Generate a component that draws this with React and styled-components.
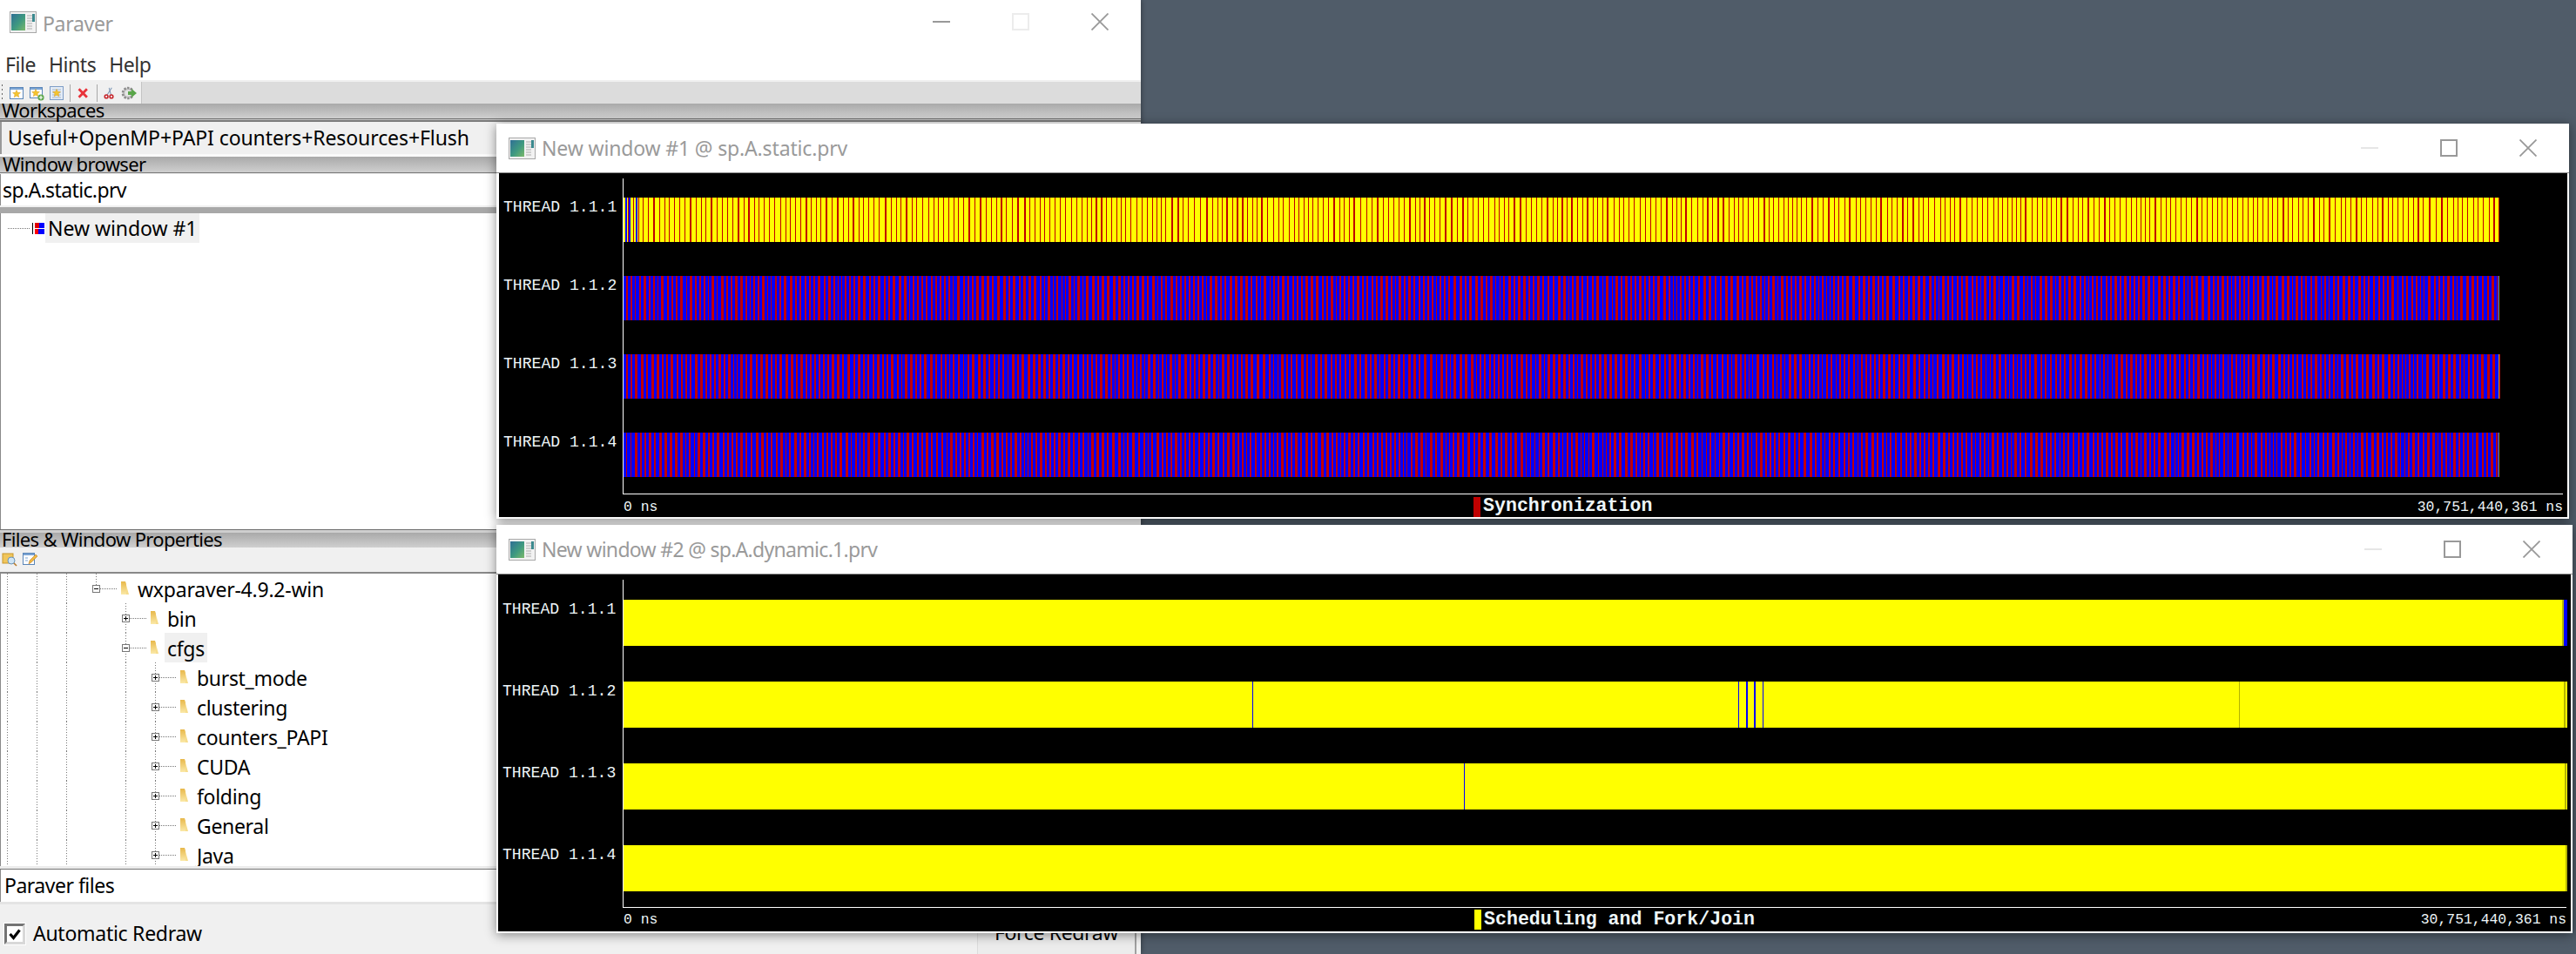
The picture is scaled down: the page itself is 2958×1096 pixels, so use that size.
import React from 'react';
import styled, { createGlobalStyle } from 'styled-components';

const Global = createGlobalStyle`
  html, body { margin: 0; padding: 0; background: #505c69; overflow: hidden; }
  #root { width: 2958px; height: 1096px; }
  * { box-sizing: border-box; }
`;

const UI = `"Noto Sans", "Open Sans", sans-serif`;
const MONO = `"Liberation Mono", monospace`;

const Desktop = styled.div`
  position: relative; width: 2958px; height: 1096px; overflow: hidden;
  background: #505c69; font-family: ${UI}; color: #000;
`;

/* ---------- main window ---------- */
const MainWindow = styled.div`
  position: absolute; left: 0; top: 0; width: 1310px; height: 1096px;
  display: flex; flex-direction: column; background: #f0f0f0;
  box-shadow: 0 0 6px rgba(0,0,0,.45);
`;
const TitleBar = styled.div`
  flex: none; height: ${p => p.$h}px; background: #fff; display: flex; align-items: center;
  padding-left: ${p => p.$pl}px; border-bottom: ${p => p.$line ? '1px solid #8a8a8a' : 'none'};
`;
const TitleText = styled.span`
  margin-left: ${p => p.$gap}px; padding-top: ${p => p.$pt || 0}px; font-size: 23px; letter-spacing: ${p => p.$ls}px; color: #9a9a9a; line-height: 1; white-space: nowrap;
`;
const Controls = styled.div`
  margin-left: auto; display: flex; align-items: center; padding-right: ${p => p.$pr}px; gap: ${p => p.$gap}px;
`;
const MenuBar = styled.div`
  flex: none; height: 42px; background: #fff; display: flex; align-items: center; gap: 15px; padding: 14px 0 8px 6px;
  font-size: 23px; letter-spacing: -.45px; color: #333; line-height: 1;
`;
const ToolStrip = styled.div`
  flex: none; height: 27px; border-top: 2px solid #f0f0f0; background: #dcdcdc; display: flex;
`;
const ToolGroup = styled.div`
  width: 163px; background: #f0f0f0; border-right: 1px solid #c4c4c4; display: flex; align-items: center; padding-left: 2px; position: relative;
`;
const Grip = styled.span`
  width: 2px; height: 20px; margin-right: 7px; background: repeating-linear-gradient(to bottom,#666 0 2px,transparent 2px 5px);
`;
const ToolIcon = styled.svg`
  flex: none; width: ${p => p.$w || 18}px; height: 18px; margin-right: ${p => p.$mr ?? 5}px; display: block;
`;
const ToolSep = styled.span`
  width: 1px; height: 20px; background: #a8a8a8; margin: 0 ${p => p.$m || 8}px 0 ${p => p.$ml || 3}px;
`;
const Caption = styled.div`
  position: relative; z-index: 1; flex: none; height: ${p => p.$h}px; display: flex; align-items: center; padding: 0 0 3px ${p => p.$pl || 2}px;
  background: linear-gradient(to bottom, #a9a9a9, #cfcfcf); font-size: 22px; letter-spacing: -.65px; line-height: 1; white-space: nowrap;
  border-bottom: ${p => p.$bb || 'none'};
`;
const Sash = styled.div`
  position: relative; flex: none; height: ${p => p.$h}px; background: ${p => p.$c};
`;
const ComboBox = styled.div`
  flex: none; height: 37px; background: #f0f0f0; border-left: 2px solid #9a9a9a; display: flex; align-items: center; padding-left: 7px;
  font-size: 23px; letter-spacing: -.09px; white-space: nowrap; line-height: 1;
`;
const Field = styled.div`
  flex: none; height: ${p => p.$h}px; background: #fff; border-left: 1px solid #8a8a8a; display: flex; align-items: center; padding-left: ${p => p.$pl}px;
  font-size: 23px; letter-spacing: ${p => p.$ls}px; line-height: 1;
`;
const TreePane = styled.div`
  flex: 0 0 ${p => p.$fixed}px; margin-bottom: ${p => p.$mb || 0}px; background: #fff; overflow: hidden; border-left: 1px solid #8a8a8a; display: flex; flex-direction: column;
`;
const TreeRow = styled.div`
  flex: none; height: 34px; display: flex; align-items: stretch; margin-left: -1px;
`;
const Guide = styled.span`
  flex: none; width: 34px;
  ${p => p.$on && `background: repeating-linear-gradient(to bottom,#777 0 1px,transparent 1px 3px) 8px 0 / 1px 100% no-repeat;`}
`;
const Expander = styled.span`
  flex: none; width: 34px; position: relative;
  background:
    repeating-linear-gradient(to right,#777 0 1px,transparent 1px 2px) 13px 17px / 20px 1px no-repeat,
    repeating-linear-gradient(to bottom,#777 0 1px,transparent 1px 3px) 8px 0 / 1px ${p => p.$top ? '14px' : '100%'} no-repeat;
`;
const ExpBox = styled.span`
  position: absolute; left: 4px; top: 13px; width: 9px; height: 9px; background: #fff; border: 1px solid #777;
  &::before { content: ''; position: absolute; left: 1px; right: 1px; top: 3px; height: 1px; background: #000; }
  ${p => p.$plus && `&::after { content: ''; position: absolute; top: 1px; bottom: 1px; left: 3px; width: 1px; background: #000; }`}
`;
const FolderIcon = styled.svg`
  flex: none; width: 11px; height: 18px; margin: 8px 9px 0 2px; display: block;
`;
const NodeLabel = styled.span`
  display: flex; align-items: center; padding: ${p => p.$pt ?? 3}px 3px 0; margin-left: -3px; height: 34px; font-size: 23px; letter-spacing: ${p => p.$ls ?? -.32}px; white-space: nowrap; line-height: 1;
  background: ${p => p.$sel ? '#f0f0f0' : 'transparent'};
`;
const Leader = styled.span`
  flex: none; width: 36px; margin-left: 9px; background: repeating-linear-gradient(to right,#777 0 1px,transparent 1px 2px) 0 17px / 25px 1px no-repeat;
`;
const WinNode = styled.svg`
  flex: none; width: 14px; height: 13px; margin: 11px 4px 0 -8px; display: block;
`;
const PanelTools = styled.div`
  flex: none; height: 30px; background: #f0f0f0; border-bottom: 2px solid #888; display: flex; align-items: center; gap: 5px; padding: 0 0 3px 2px;
`;
const BottomBar = styled.div`
  flex: 1; display: flex; align-items: stretch; background: #f0f0f0;
`;
const CheckRow = styled.label`
  display: flex; align-items: center; gap: 9px; padding: 0 0 0 5px; font-size: 23px; letter-spacing: -.27px; line-height: 1; margin-top: 10px;
`;
const CheckBox = styled.span`
  width: 24px; height: 24px; background: #fff; display: flex; align-items: center; justify-content: center;
  border: 3px solid; border-color: #747474 #d8d8d8 #d8d8d8 #747474; outline: 1px solid #fff;
`;
const CheckMark = styled.svg`
  width: 14px; height: 14px; display: block;
`;
const ForceButton = styled.div`
  margin-left: auto; width: 183px; margin-right: 5px; background: #ececec; border-left: 1px solid #dcdcdc; border-right: 2px solid #a0a0a0;
  display: flex; justify-content: center; align-items: center; font-size: 23px; letter-spacing: -.35px; line-height: 1; padding-top: 8px; white-space: nowrap;
`;

/* ---------- timeline windows ---------- */
const TimelineWindow = styled.div`
  position: absolute; left: 570px; top: ${p => p.$top}px; width: ${p => p.$w}px; height: ${p => p.$h}px;
  display: flex; flex-direction: column; background: #fff; box-shadow: 0 2px 12px rgba(0,0,0,.45);
  z-index: ${p => p.$z};
`;
const Plot = styled.div`
  flex: 1; margin: 0 2px 2px ${p => p.$ml}px; background: #000; color: #eef6f8; font-family: ${MONO}; display: flex; flex-direction: column;
`;
const PlotBody = styled.div`
  flex: none; display: flex; padding-top: 6px;
`;
const LabelColumn = styled.div`
  flex: none; width: ${p => p.$w}px; padding: ${p => p.$pt}px 0 0 5px; display: flex; flex-direction: column; gap: ${p => p.$gap}px;
`;
const ThreadLabel = styled.div`
  height: 22px; font-size: 18.1px; line-height: 22px; white-space: nowrap;
`;
const TraceColumn = styled.div`
  flex: none; width: ${p => p.$w}px; height: ${p => p.$h}px; border-left: 1px solid #fff; border-bottom: 1px solid #fff;
  padding-top: ${p => p.$pt}px; display: flex; flex-direction: column; gap: ${p => p.$gap}px;
`;
const Trace = styled.svg`
  display: block; flex: none; overflow: visible;
`;
const PlotFooter = styled.div`
  flex: 1; display: grid; grid-template-columns: ${p => p.$col}px 1fr auto; align-items: center; padding: ${p => p.$pt || 0}px 5px 0 ${p => p.$pl}px; font-size: 16.4px; white-space: nowrap;
`;
const Legend = styled.div`
  display: flex; align-items: center; gap: 3px; font-size: 21.6px; font-weight: 700; line-height: 1;
`;
const Swatch = styled.span`
  width: 8px; height: 23px; background: ${p => p.$c};
`;

/* ---------- icons ---------- */
const AppIcon = () => (
  <svg width="31" height="25" viewBox="0 0 31 25" style={{ flex: 'none', display: 'block' }}>
    <defs>
      <linearGradient id="appg" x1="0" y1="0" x2="1" y2="1">
        <stop offset="0" stopColor="#2f6f95" /><stop offset=".55" stopColor="#3f9a80" /><stop offset="1" stopColor="#7cb96a" />
      </linearGradient>
    </defs>
    <rect x=".5" y=".5" width="30" height="24" fill="#f2f2f2" stroke="#a8a8a8" />
    <rect x="2" y="3" width="16" height="19" fill="url(#appg)" />
    <path d="M20 5h6M20 8h6M20 11h6M20 14h6M20 17h6M20 20h6" stroke="#c4c4c4" strokeWidth="1.4" />
    <rect x="26" y="3" width="3" height="9" fill="#3c8a8f" />
  </svg>
);
const Glyph = ({ kind, c }) => (
  <svg width="20" height="20" viewBox="0 0 20 20" style={{ display: 'block', flex: 'none' }} shapeRendering={kind === 'square' || kind === 'min' ? 'crispEdges' : 'auto'}>
    {kind === 'min' && <rect x="0" y="9" width="20" height="2" fill={c} />}
    {kind === 'square' && <rect x="1" y="1" width="18" height="18" fill="none" stroke={c} strokeWidth="2" />}
    {kind === 'close' && <path d="M.5.5l19 19M19.5.5l-19 19" stroke={c} strokeWidth="1.8" fill="none" />}
  </svg>
);
const Folder = () => (
  <FolderIcon viewBox="0 0 11 18">
    <defs><linearGradient id="fg" x1="0" y1="0" x2="0" y2="1"><stop offset="0" stopColor="#e8b84a" /><stop offset="1" stopColor="#fbe9a8" /></linearGradient></defs>
    <path d="M1 1l5 0 1 3 0 12-6 0z" fill="url(#fg)" />
    <path d="M7 5l3 11-3 0z" fill="#f6dc8c" />
  </FolderIcon>
);

const Star = ({ x = 9, y = 9, r = 4.6 }) => {
  const pts = [];
  for (let i = 0; i < 10; i++) {
    const a = -Math.PI / 2 + i * Math.PI / 5;
    const q = i % 2 ? r * 0.45 : r;
    pts.push(`${(x + q * Math.cos(a)).toFixed(1)},${(y + q * Math.sin(a)).toFixed(1)}`);
  }
  return <polygon points={pts.join(' ')} fill="#f5c52e" stroke="#d89a1c" strokeWidth=".5" />;
};

/* ---------- traces ---------- */
function rng(seed) {
  let a = seed >>> 0;
  return () => {
    a = (a + 0x6d2b79f5) >>> 0;
    let t = a;
    t = Math.imul(t ^ (t >>> 15), t | 1);
    t ^= t + Math.imul(t ^ (t >>> 7), t | 61);
    return ((t ^ (t >>> 14)) >>> 0) / 4294967296;
  };
}
function stripes(seed, width, height, gapChoices, barChoices) {
  const r = rng(seed);
  let x = 0, d = '';
  while (x < width) {
    x += gapChoices[Math.floor(r() * gapChoices.length)];
    const w = barChoices[Math.floor(r() * barChoices.length)];
    if (x < width) d += `M${x} 0h${w}v${height}h-${w}z`;
    x += w;
  }
  return d;
}
const W1 = 2154, H1 = 51;
const SYNC_Y = stripes(11, W1, H1, [4, 4, 5, 5, 5, 5, 6], [1, 1, 1, 1, 2]);
const SYNC_B = [21, 77, 133].map(s => stripes(s, W1, H1, [3, 3, 3, 4], [2, 2, 2, 3, 3, 1]));

const StripedTrace = ({ base, d, edge, early }) => (
  <Trace width={W1} height={H1} viewBox={`0 0 ${W1} ${H1}`} shapeRendering="crispEdges">
    <rect width={W1} height={H1} fill={base} />
    <path d={d} fill="#c00000" />
    {early && early.map(x => <rect key={x} x={x} width="2" height={H1} fill="#0000ff" />)}
    <rect x={W1 - 1} width="1" height={H1} fill={edge} />
  </Trace>
);
const W2 = 2232, H2 = 53;
const SolidTrace = ({ marks }) => (
  <Trace width={W2} height={H2} viewBox={`0 0 ${W2} ${H2}`} shapeRendering="crispEdges">
    <rect width={W2} height={H2} fill="#ffff00" />
    {marks.map(([x, w, c]) => <rect key={x} x={x} width={w} height={H2} fill={c} />)}
  </Trace>
);

const B = '#0000ff', O = '#b4b400';
const DYN = [
  [[2226, 2, O], [2228, 4, B]],
  [[722, 1, B], [1280, 1, B], [1289, 2, B], [1298, 2, B], [1308, 1, B], [1855, 1, O], [2228, 2, O]],
  [[965, 1, B], [2229, 2, O]],
  [[2230, 2, O]],
];

const Node = ({ guides, kind, sel, ls, children }) => (
  <TreeRow>
    {guides.map((g, i) => <Guide key={i} $on={g} />)}
    <Expander $top={kind === 'top'}>
      <ExpBox $plus={kind === 'plus'} />
    </Expander>
    <Folder />
    <NodeLabel $sel={sel} $ls={ls}>{children}</NodeLabel>
  </TreeRow>
);

const Title = ({ text, ls }) => (
  <TitleBar $h={57} $pl={14} $line>
    <AppIcon />
    <TitleText $gap={7} $ls={ls}>{text}</TitleText>
    <Controls $pr={37} $gap={71}>
      <Glyph kind="min" c="#e6e6e6" />
      <Glyph kind="square" c="#999" />
      <Glyph kind="close" c="#999" />
    </Controls>
  </TitleBar>
);

export default function App() {
  const g3 = [1, 1, 1];
  return (
    <Desktop>
      <Global />
      <MainWindow>
        <TitleBar $h={50} $pl={11}>
          <AppIcon />
          <TitleText $gap={7} $ls={-.3} $pt={5}>Paraver</TitleText>
          <Controls $pr={37} $gap={71}>
            <Glyph kind="min" c="#999" />
            <Glyph kind="square" c="#ececec" />
            <Glyph kind="close" c="#999" />
          </Controls>
        </TitleBar>
        <MenuBar><span>File</span><span>Hints</span><span>Help</span></MenuBar>
        <ToolStrip>
          <ToolGroup>
            <Grip />
            <ToolIcon viewBox="0 0 18 18"><rect x="1.5" y="2.5" width="15" height="13" fill="#fff" stroke="#5b86b8" /><rect x="2" y="3" width="14" height="2" fill="#7aa4d4" /><Star y={10} /></ToolIcon>
            <ToolIcon viewBox="0 0 18 18"><rect x="1.5" y="2.5" width="14" height="12" fill="#fff" stroke="#5b86b8" /><rect x="2" y="3" width="13" height="2" fill="#7aa4d4" /><Star x={8} y={9} /><circle cx="14" cy="14" r="3.6" fill="#5aa64a" /><path d="M14 11.8v4.4M11.8 14h4.4" stroke="#fff" strokeWidth="1.2" /></ToolIcon>
            <ToolIcon viewBox="0 0 18 18"><rect x="1.5" y="1.5" width="15" height="15" fill="#e4ecf6" stroke="#7d9cc6" /><path d="M4 5h10M4 8h10M4 11h10M4 14h10" stroke="#a6b8ce" /><Star /></ToolIcon>
            <ToolSep $ml={1} $m={9} />
            <ToolIcon viewBox="0 0 18 18" $w={14} $mr={7}><path d="M2 3l12 12M14 3L2 15" stroke="#e8333a" strokeWidth="3.6" /></ToolIcon>
            <ToolSep $ml={1} $m={8} />
            <ToolIcon viewBox="0 0 18 18" $w={14} $mr={6}><path d="M5 12L12 1" stroke="#7a94b4" strokeWidth="1.3" /><path d="M11 12L8 1" stroke="#7a94b4" strokeWidth="1.3" /><circle cx="4" cy="14" r="2.4" fill="none" stroke="#c8242a" strokeWidth="2" /><circle cx="11.5" cy="14" r="2.4" fill="none" stroke="#c8242a" strokeWidth="2" /></ToolIcon>
            <ToolIcon viewBox="0 0 18 18"><circle cx="8" cy="9" r="6" fill="#c8c8c8" stroke="#8c8c8c" strokeWidth="2.6" strokeDasharray="2.4 1.4" /><circle cx="8" cy="9" r="3.6" fill="#e6e6e6" /><path d="M8 7h4V4l6 5-6 5v-3H8z" fill="#5aa64a" /></ToolIcon>
          </ToolGroup>
        </ToolStrip>
        <Caption $h={17}>Workspaces</Caption>
        <Sash $h={4} $c="linear-gradient(to bottom,#6e6e6e 0 1px,#c8c8c8 1px 2px,#7a7a7a 2px 4px)" />
        <ComboBox>Useful+OpenMP+PAPI counters+Resources+Flush</ComboBox>
        <Sash $h={3} $c="#fafafa" />
        <Caption $h={19} $pl={3} $bb="1px solid #777">Window browser</Caption>
        <Sash $h={1} $c="#f0f0f0" />
        <Field $h={36} $pl={2} $ls={-.62}>sp.A.static.prv</Field>
        <Sash $h={2} $c="#f0f0f0" />
        <Sash $h={7} $c="#a8a8a8" />
        <TreePane $fixed={363}>
          <TreeRow>
            <Leader />
            <WinNode viewBox="0 0 14 13" shapeRendering="crispEdges">
              <rect width="1" height="13" fill="#000" /><rect x="3" y="0" width="11" height="6" fill="#e00000" /><rect x="8" y="0" width="6" height="6" fill="#0000ff" /><rect x="3" y="7" width="4" height="6" fill="#ff0000" /><rect x="7" y="7" width="7" height="6" fill="#0000ff" />
            </WinNode>
            <NodeLabel $sel $ls={-.04} $pt={0}>New window #1</NodeLabel>
          </TreeRow>
        </TreePane>
        <Sash $h={4} $c="linear-gradient(to bottom,#6e6e6e 0 1px,#cfcfcf 1px 4px)" />
        <Caption $h={17}>Files &amp; Window Properties</Caption>
        <PanelTools>
          <ToolIcon viewBox="0 0 18 18" $mr={0}><rect x="1" y="3" width="12" height="11" fill="#f0c65c" stroke="#c8962a" /><circle cx="11" cy="11" r="4" fill="#cfe4f4" stroke="#6a94b8" /><path d="M14 14l3 3" stroke="#b87a2a" strokeWidth="1.6" /></ToolIcon>
          <ToolIcon viewBox="0 0 18 18" $mr={0}><rect x="1.5" y="2.5" width="13" height="13" fill="#fff" stroke="#5b86b8" /><rect x="2" y="3" width="12" height="2" fill="#7aa4d4" /><path d="M4 8h3M4 11h3" stroke="#7aa4d4" /><path d="M8 15l1-4 7-7 2 2-7 7z" fill="#f0b840" stroke="#b87a2a" strokeWidth=".6" /></ToolIcon>
        </PanelTools>
        <TreePane $fixed={340} $mb={-4}>
          <Node guides={g3} kind="top" ls={-.22}>wxparaver-4.9.2-win</Node>
          <Node guides={[1, 1, 1, 0]} kind="plus">bin</Node>
          <Node guides={[1, 1, 1, 0]} kind="minus" sel>cfgs</Node>
          {['burst_mode', 'clustering', 'counters_PAPI', 'CUDA', 'folding', 'General', 'Java'].map(n => (
            <Node key={n} guides={[1, 1, 1, 0, 1]} kind="plus">{n}</Node>
          ))}
        </TreePane>
        <Sash $h={3} $c="#ececec" />
        <Sash $h={1} $c="#777" />
        <Field $h={37} $pl={4} $ls={-.5}>Paraver files</Field>
        <Sash $h={3} $c="#e4e4e4" />
        <BottomBar>
          <CheckRow>
            <CheckBox>
              <CheckMark viewBox="0 0 14 14"><path d="M1.5 7l4 4.5L12.5 2.5" fill="none" stroke="#000" strokeWidth="3.2" /></CheckMark>
            </CheckBox>
            Automatic Redraw
          </CheckRow>
          <ForceButton>Force Redraw</ForceButton>
        </BottomBar>
      </MainWindow>

      <TimelineWindow $top={142} $w={2380} $h={454} $z={2}>
        <Title text="New window #1 @ sp.A.static.prv" ls={-.15} />
        <Plot $ml={3}>
          <PlotBody>
            <LabelColumn $w={142} $pt={22} $gap={68}>
              {[1, 2, 3, 4].map(i => <ThreadLabel key={i}>THREAD 1.1.{i}</ThreadLabel>)}
            </LabelColumn>
            <TraceColumn $w={2228} $h={363} $pt={22} $gap={39}>
              <StripedTrace base="#ffff00" d={SYNC_Y} edge="#c00000" early={[2, 6, 14]} />
              {SYNC_B.map((d, i) => <StripedTrace key={i} base="#0000ff" d={d} edge="#a8a030" />)}
            </TraceColumn>
          </PlotBody>
          <PlotFooter $col={976} $pl={143} $pt={2}>
            <span>0 ns</span>
            <Legend><Swatch $c="#c00000" />Synchronization</Legend>
            <span>30,751,440,361 ns</span>
          </PlotFooter>
        </Plot>
      </TimelineWindow>

      <TimelineWindow $top={603} $w={2384} $h={469} $z={3}>
        <Title text="New window #2 @ sp.A.dynamic.1.prv" ls={-.7} />
        <Plot $ml={2}>
          <PlotBody>
            <LabelColumn $w={143} $pt={23} $gap={72}>
              {[1, 2, 3, 4].map(i => <ThreadLabel key={i}>THREAD 1.1.{i}</ThreadLabel>)}
            </LabelColumn>
            <TraceColumn $w={2232} $h={377} $pt={23} $gap={41}>
              {DYN.map((m, i) => <SolidTrace key={i} marks={m} />)}
            </TraceColumn>
          </PlotBody>
          <PlotFooter $col={977} $pl={144}>
            <span>0 ns</span>
            <Legend><Swatch $c="#ffff00" />Scheduling and Fork/Join</Legend>
            <span>30,751,440,361 ns</span>
          </PlotFooter>
        </Plot>
      </TimelineWindow>
    </Desktop>
  );
}
